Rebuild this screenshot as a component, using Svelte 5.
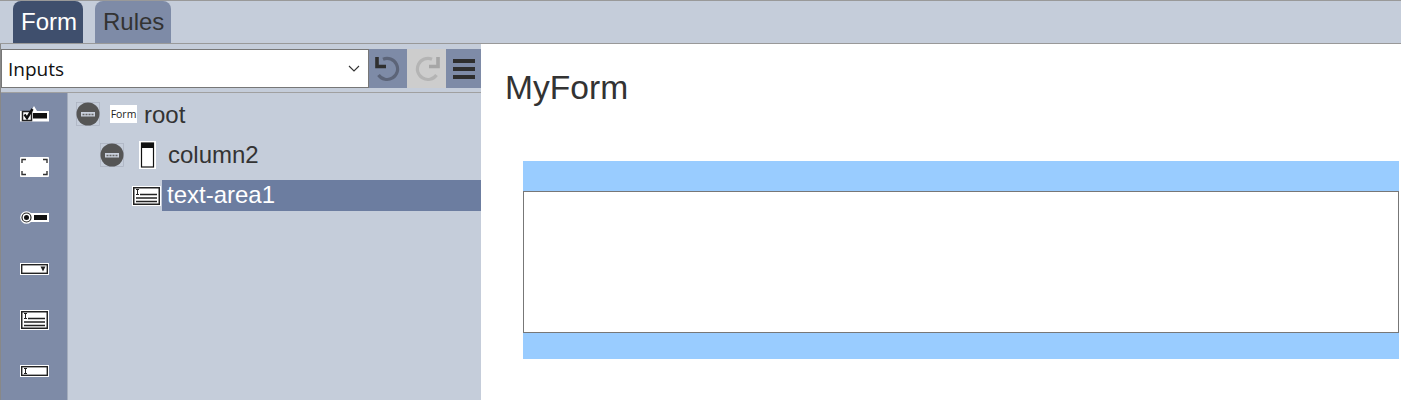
<script>
  const rail = ['check', 'frame', 'radio', 'drop', 'area', 'input'];
</script>

{#snippet collapse()}
  <span class="collapse">
    <svg width="24" height="24" viewBox="0 0 24 24">
      <rect x="0.5" y="0.5" width="23" height="23" fill="none" stroke="#aab1bf" stroke-width="0.7" />
      <circle cx="12" cy="12" r="11.5" fill="#555" />
      <rect x="5" y="10" width="14" height="4.5" fill="#c9cfdc" />
      <path d="M6.500 12.500h2M9.500 12.500h2M12.500 12.500h2M15.500 12.500h2" stroke="#666" stroke-width="1.400" />
    </svg>
  </span>
{/snippet}

{#snippet areaIcon()}
  <svg width="29" height="20" viewBox="0 0 29 20">
    <rect width="29" height="20" fill="#fff" />
    <rect x="1.750" y="1.750" width="25.500" height="16.500" fill="#fff" stroke="#222" stroke-width="1.500" />
    <path d="M4 3.500h3M5.500 3.500v5M4 8.500h3" stroke="#222" stroke-width="1" fill="none" />
    <path d="M8 8.500h17M4 12h21M4 15.500h21" stroke="#222" stroke-width="1.500" />
  </svg>
{/snippet}

<div class="page">
  <header class="tabs">
    <div class="tab active">Form</div>
    <div class="tab rules">Rules</div>
  </header>

  <div class="main">
    <aside class="side">
      <div class="toolbar">
        <div class="select">
          <span>Inputs</span>
          <svg width="12" height="7" viewBox="0 0 12 7">
            <path d="M1 1l5 5 5-5" fill="none" stroke="#333" stroke-width="1.100" />
          </svg>
        </div>
        <button class="tool undo" aria-label="undo">
          <svg width="26" height="26" viewBox="0 0 26 26">
            <path d="M8 3.300A10.500 10.500 0 1 1 3.500 19" fill="none" stroke="#5c6478" stroke-width="3.200" />
            <path d="M2 1v9.500H11" fill="none" stroke="#2f2f2f" stroke-width="3.600" />
          </svg>
        </button>
        <button class="tool redo" aria-label="redo">
          <svg width="26" height="26" viewBox="0 0 26 26">
            <path d="M18 3.300A10.500 10.500 0 1 0 22.500 19" fill="none" stroke="#b4b4b4" stroke-width="3.200" />
            <path d="M24 1v9.500H15" fill="none" stroke="#a6a6a6" stroke-width="3.600" />
          </svg>
        </button>
        <button class="tool menu" aria-label="menu">
          <i></i><i></i><i></i>
        </button>
      </div>

      <div class="panel">
        <nav class="rail">
          {#each rail as kind}
            <div class="rail-item">
              {#if kind === 'check'}
                <svg class="check" width="29" height="19" viewBox="0 0 29 19">
                  <path d="M0 5h11l3-5 3 5h12v10.500H0z" fill="#fff" />
                  <rect x="2.500" y="5.500" width="9" height="9" fill="#fff" stroke="#222" stroke-width="1.500" />
                  <path d="M4.500 8.500l2.500 3.500 5.500-9" fill="none" stroke="#111" stroke-width="2.400" />
                  <rect x="13" y="7" width="14" height="5.500" fill="#111" />
                </svg>
              {:else if kind === 'frame'}
                <svg width="29" height="20" viewBox="0 0 29 20">
                  <rect width="29" height="20" rx="1" fill="#fff" />
                  <path d="M2 6V2.500h4M23 2.500h4V6M2 14v3.500h4M23 17.500h4V14" fill="none" stroke="#333" stroke-width="1.400" />
                </svg>
              {:else if kind === 'radio'}
                <svg width="29" height="13" viewBox="0 0 29 13">
                  <rect x="11" y="2" width="18" height="9" fill="#fff" />
                  <circle cx="6.500" cy="6.500" r="6.300" fill="#fff" />
                  <circle cx="6.500" cy="6.500" r="4.500" fill="#fff" stroke="#222" stroke-width="1.200" />
                  <circle cx="6.500" cy="6.500" r="2.500" fill="#111" />
                  <rect x="14" y="4" width="13" height="5" fill="#111" />
                </svg>
              {:else if kind === 'drop'}
                <svg width="29" height="12" viewBox="0 0 29 12">
                  <rect width="29" height="12" fill="#fff" />
                  <rect x="1.700" y="1.700" width="25.600" height="8.600" fill="#fff" stroke="#222" stroke-width="1.400" />
                  <path d="M20.500 3.500h5l-2.500 5z" fill="#222" />
                </svg>
              {:else if kind === 'area'}
                {@render areaIcon()}
              {:else}
                <svg width="29" height="12" viewBox="0 0 29 12">
                  <rect width="29" height="12" fill="#fff" />
                  <rect x="1.700" y="1.700" width="25.600" height="8.600" fill="#fff" stroke="#222" stroke-width="1.400" />
                  <path d="M4 3.500h3M5.500 3.500v5M4 8.500h3" fill="none" stroke="#222" />
                </svg>
              {/if}
            </div>
          {/each}
        </nav>

        <div class="tree">
          <div class="row root">
            {@render collapse()}
            <span class="form-badge">Form</span>
            <span class="label">root</span>
          </div>
          <div class="row column">
            {@render collapse()}
            <svg class="col-icon" width="17" height="28" viewBox="0 0 17 28">
              <rect width="17" height="28" fill="#fff" />
              <rect x="2.500" y="2" width="12" height="24" fill="#fff" stroke="#111" stroke-width="1.200" />
              <rect x="2.500" y="2" width="12" height="5" fill="#111" />
            </svg>
            <span class="label">column2</span>
          </div>
          <div class="row area">
            {@render areaIcon()}
            <span class="label selected"><span class="lift">text-area1</span></span>
          </div>
        </div>
      </div>
    </aside>

    <section class="canvas">
      <h1>MyForm</h1>
      <div class="field">
        <div class="box"></div>
      </div>
    </section>
  </div>
</div>

<style>
  :global(body) {
    margin: 0;
    background: #fff;
  }

  .page {
    width: 1401px;
    height: 400px;
    overflow: hidden;
    box-sizing: border-box;
    border-top: 1px solid #999;
    font-family: "Liberation Sans", sans-serif;
    display: flex;
    flex-direction: column;
  }

  .tabs {
    height: 42px;
    flex: none;
    background: #c5cdda;
    border-bottom: 1px solid #999;
    display: flex;
    gap: 12px;
    padding-left: 13px;
  }

  .tab {
    width: 70px;
    height: 42px;
    padding-left: 8px;
    box-sizing: border-box;
    line-height: 42px;
    font-size: 24px;
    color: #333;
    background: #7e8ba7;
    border-radius: 8px 8px 0 0;
  }

  .tab.rules {
    width: 76px;
  }

  .tab.active {
    background: #3f4f6d;
    color: #fff;
  }

  .main {
    flex: 1;
    display: flex;
    min-height: 0;
  }

  .side {
    width: 481px;
    flex: none;
    background: #c5cdda;
    border-left: 1px solid #888;
    box-sizing: border-box;
    display: flex;
    flex-direction: column;
  }

  .toolbar {
    height: 39px;
    margin-top: 5px;
    display: flex;
    flex: none;
  }

  .select {
    width: 368px;
    box-sizing: border-box;
    background: #fff;
    border: 1px solid #777;
    display: flex;
    align-items: center;
    justify-content: space-between;
    padding: 0 8px 0 6px;
    font-family: "Open Sans", sans-serif;
    font-size: 19px;
    color: #111;
  }

  .tool {
    border: 0;
    padding: 0;
    display: flex;
    align-items: center;
    justify-content: center;
    background: #7e8ba7;
  }

  .undo { width: 38px; }
  .redo { width: 39px; background: #cdcdcd; }

  .menu {
    width: 35px;
    flex-direction: column;
    gap: 4px;
  }

  .menu i {
    display: block;
    width: 22px;
    height: 4px;
    background: #2e2e2e;
  }

  .panel {
    margin-top: 4px;
    border-top: 1px solid #a0a0a0;
    flex: 1;
    display: flex;
    min-height: 0;
  }

  .rail {
    width: 67px;
    flex: none;
    background: #7e8ba7;
    border-right: 1px solid #a4adbd;
    box-sizing: border-box;
    display: flex;
    flex-direction: column;
    gap: 26px;
    padding-top: 10px;
  }

  .rail-item {
    height: 25px;
    flex: none;
    display: flex;
    justify-content: center;
    align-items: center;
  }

  .tree {
    flex: 1;
    min-width: 0;
    display: flex;
    flex-direction: column;
    padding-top: 1px;
  }

  .row {
    height: 40px;
    display: flex;
    align-items: center;
    flex: none;
  }

  .root { padding-left: 8px; }
  .column { padding-left: 32px; margin-top: 1px; }
  .area { padding-left: 64px; height: 31px; margin-top: 5px; }

  .collapse {
    width: 24px;
    height: 24px;
    display: block;
  }

  .collapse svg { display: block; }

  .form-badge {
    margin-left: 10px;
    width: 27px;
    height: 18px;
    background: #fff;
    color: #222;
    font-size: 10.500px;
    line-height: 18px;
    text-align: center;
    font-family: "Open Sans", sans-serif;
  }

  .label {
    font-size: 24px;
    color: #333;
    line-height: 29px;
  }

  .root .label { margin-left: 7px; }
  .column .label { margin-left: 12px; padding-bottom: 2px; }
  .col-icon { margin-left: 15px; }

  .selected {
    flex: 1;
    margin-left: 1px;
    height: 31px;
    background: #6c7da0;
    color: #fff;
    padding-left: 5px;
  }

  .lift {
    display: block;
    line-height: 29px;
  }

  .canvas {
    flex: 1;
    min-width: 0;
    background: #fff;
  }

  h1 {
    margin: 24px 0 0 24px;
    font-size: 33.600px;
    line-height: 39px;
    font-weight: 400;
    color: #333;
  }

  .field {
    margin: 54px 2px 0 42px;
    background: #99ccff;
    padding: 30px 0 26px;
  }

  .box {
    height: 140px;
    background: #fff;
    border: 1px solid #777;
  }
</style>
